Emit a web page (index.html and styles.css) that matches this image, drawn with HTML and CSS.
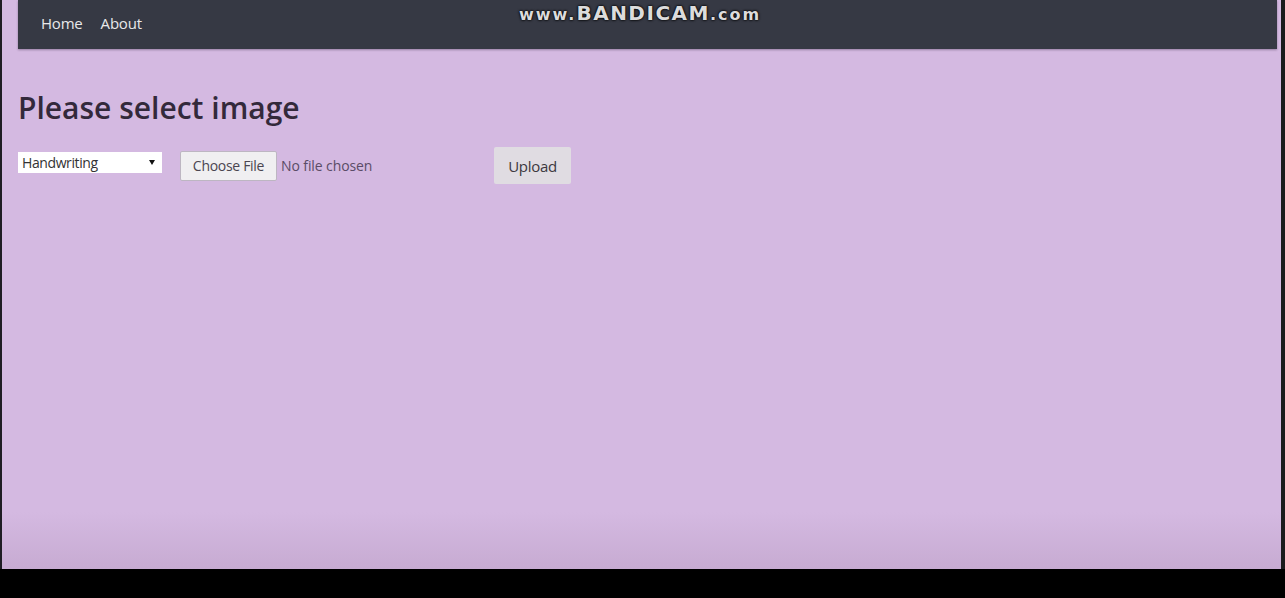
FILE: index.html
```html
<!DOCTYPE html>
<html lang="en">
<head>
<meta charset="utf-8">
<title>Please select image</title>
<link rel="stylesheet" href="styles.css">
</head>
<body>
<div class="screen">
  <div class="frame">
    <div class="edge-left"></div>
    <div class="page">
      <nav class="navbar">
        <a class="nav-link" href="#">Home</a>
        <a class="nav-link" href="#">About</a>
      </nav>
      <main class="content">
        <h1 class="title">Please select image</h1>
        <form class="controls">
          <div class="select-wrap">
            <select class="mode">
              <option>Handwriting</option>
            </select>
          </div>
          <div class="file">
            <button type="button" class="file-btn">Choose File</button>
            <span class="file-name">No file chosen</span>
          </div>
          <button type="button" class="upload">Upload</button>
        </form>
      </main>
    </div>
    <div class="edge-right"></div>
  </div>
  <div class="bottom"></div>
  <div class="watermark"><span class="wm-small">www.</span>BANDICAM<span class="wm-small">.com</span></div>
</div>
</body>
</html>
```

FILE: styles.css
```css
* { box-sizing: border-box; }
html, body { margin: 0; padding: 0; background: #000; }
body { font-family: "Open Sans", "Liberation Sans", sans-serif; }

.screen {
  position: relative;
  width: 1285px;
  height: 598px;
  display: flex;
  flex-direction: column;
  overflow: hidden;
}
.frame {
  display: flex;
  height: 569px;
}
.edge-left { width: 2px; background: #1f1d24; }
.edge-right { width: 4px; background: #1b1b1d; }
.page {
  flex: 1;
  background: linear-gradient(to bottom, #d4b9e1 0%, #d4b9e1 90%, #c7abd2 100%);
  padding: 0 4px 0 16px;
}
.navbar {
  height: 49px;
  background: #363944;
  display: flex;
  align-items: center;
  gap: 18px;
  padding: 0 0 4px 23px;
  box-shadow: 0 1px 2px rgba(60, 40, 70, 0.4);
}
.nav-link {
  color: #e8e8ea;
  text-decoration: none;
  font-size: 15px;
  letter-spacing: -0.2px;
}
.content { padding-top: 40px; }
.title {
  margin: 0;
  font-size: 30px;
  font-weight: 600;
  color: #33293b;
  letter-spacing: 0;
  line-height: 38px;
}
.controls {
  display: flex;
  align-items: center;
  margin-top: 20px;
}
.select-wrap {
  position: relative;
  margin-bottom: 6px;
}
.select-wrap::after {
  content: "";
  position: absolute;
  right: 7px;
  top: 8px;
  border-left: 3px solid transparent;
  border-right: 3px solid transparent;
  border-top: 5px solid #111;
  pointer-events: none;
}
.mode {
  display: block;
  width: 144px;
  height: 21px;
  border: none;
  border-radius: 0;
  -webkit-appearance: none;
  appearance: none;
  background: #fff;
  font: 14px "Open Sans", sans-serif;
  color: #333;
  padding: 0 0 0 4px;
  letter-spacing: -0.4px;
}
.file {
  display: flex;
  align-items: center;
  margin-left: 18px;
  width: 314px;
}
.file-btn {
  width: 97px;
  height: 30px;
  background: #f0eff1;
  border: 1px solid #bdb6c2;
  border-radius: 2px;
  font: 14px "Open Sans", sans-serif;
  color: #4a4550;
  padding: 0;
  letter-spacing: -0.3px;
}
.file-name {
  margin-left: 4px;
  font-size: 14px;
  color: #5a4c66;
  letter-spacing: -0.1px;
}
.upload {
  width: 77px;
  height: 37px;
  background: #e0dce2;
  border: none;
  border-radius: 2px;
  font: 15px "Open Sans", sans-serif;
  color: #3c3840;
  padding: 0;
  letter-spacing: -0.3px;
}
.bottom { flex: 1; background: #000; }
.watermark {
  position: absolute;
  top: 1px;
  left: 519px;
  font-family: "DejaVu Sans", sans-serif;
  font-weight: bold;
  font-size: 20px;
  color: #dcdcdc;
  letter-spacing: 1.5px;
  text-shadow: 0 0 2px #000, 0 0 3px #000;
}
.wm-small { font-size: 16px; letter-spacing: 2px; }
```
